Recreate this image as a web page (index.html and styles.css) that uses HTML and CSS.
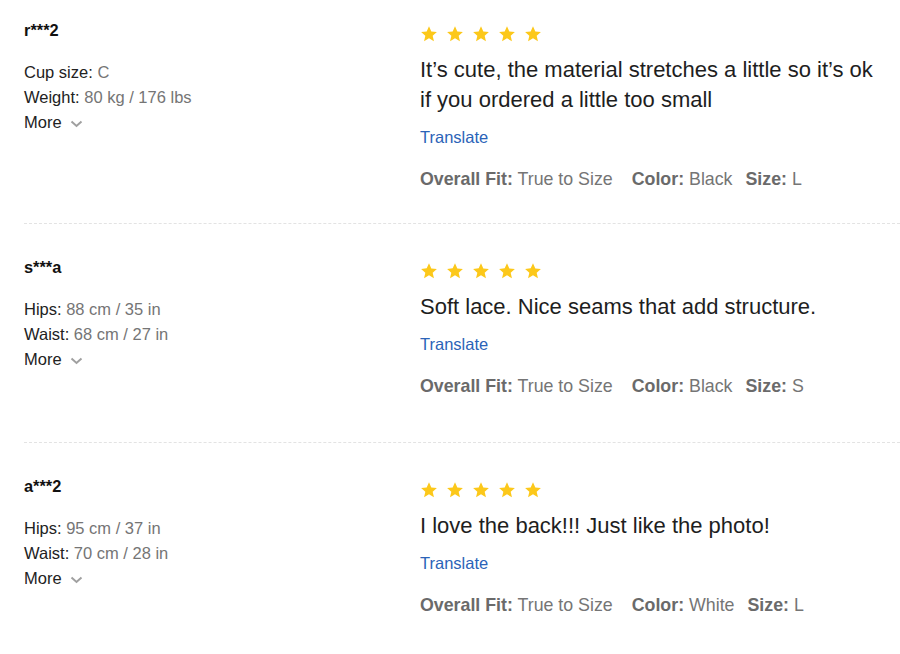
FILE: index.html
```html
<!DOCTYPE html>
<html>
<head>
<meta charset="utf-8">
<link rel="stylesheet" href="styles.css">
</head>
<body>
<div class="reviews">
  <div class="review">
    <div class="user">
      <div class="name">r***2</div>
      <div class="attrs">
        <div class="attr">Cup size: <span class="val">C</span></div>
        <div class="attr">Weight: <span class="val">80 kg / 176 lbs</span></div>
        <div class="more">More <svg class="chev" width="13" height="8" viewBox="0 0 13 8"><path d="M1.5 1.5 L6.5 6 L11.5 1.5" fill="none" stroke="#a0a0a0" stroke-width="2"/></svg></div>
      </div>
    </div>
    <div class="body">
      <div class="stars">
        <svg class="star" viewBox="0 0 24 24"><path d="M12 1.5l3.1 7 7.4.7-5.6 5 1.7 7.4L12 17.8l-6.6 3.8 1.7-7.4-5.6-5 7.4-.7z"/></svg>
        <svg class="star" viewBox="0 0 24 24"><path d="M12 1.5l3.1 7 7.4.7-5.6 5 1.7 7.4L12 17.8l-6.6 3.8 1.7-7.4-5.6-5 7.4-.7z"/></svg>
        <svg class="star" viewBox="0 0 24 24"><path d="M12 1.5l3.1 7 7.4.7-5.6 5 1.7 7.4L12 17.8l-6.6 3.8 1.7-7.4-5.6-5 7.4-.7z"/></svg>
        <svg class="star" viewBox="0 0 24 24"><path d="M12 1.5l3.1 7 7.4.7-5.6 5 1.7 7.4L12 17.8l-6.6 3.8 1.7-7.4-5.6-5 7.4-.7z"/></svg>
        <svg class="star" viewBox="0 0 24 24"><path d="M12 1.5l3.1 7 7.4.7-5.6 5 1.7 7.4L12 17.8l-6.6 3.8 1.7-7.4-5.6-5 7.4-.7z"/></svg>
      </div>
      <p class="text">It’s cute, the material stretches a little so it’s ok if you ordered a little too small</p>
      <a class="translate" href="#">Translate</a>
      <div class="meta">
        <span class="m"><b>Overall Fit:</b> True to Size</span>
        <span class="m"><b>Color:</b> Black</span>
        <span class="m"><b>Size:</b> L</span>
      </div>
    </div>
  </div>

  <div class="review">
    <div class="user">
      <div class="name">s***a</div>
      <div class="attrs">
        <div class="attr">Hips: <span class="val">88 cm / 35 in</span></div>
        <div class="attr">Waist: <span class="val">68 cm / 27 in</span></div>
        <div class="more">More <svg class="chev" width="13" height="8" viewBox="0 0 13 8"><path d="M1.5 1.5 L6.5 6 L11.5 1.5" fill="none" stroke="#a0a0a0" stroke-width="2"/></svg></div>
      </div>
    </div>
    <div class="body">
      <div class="stars">
        <svg class="star" viewBox="0 0 24 24"><path d="M12 1.5l3.1 7 7.4.7-5.6 5 1.7 7.4L12 17.8l-6.6 3.8 1.7-7.4-5.6-5 7.4-.7z"/></svg>
        <svg class="star" viewBox="0 0 24 24"><path d="M12 1.5l3.1 7 7.4.7-5.6 5 1.7 7.4L12 17.8l-6.6 3.8 1.7-7.4-5.6-5 7.4-.7z"/></svg>
        <svg class="star" viewBox="0 0 24 24"><path d="M12 1.5l3.1 7 7.4.7-5.6 5 1.7 7.4L12 17.8l-6.6 3.8 1.7-7.4-5.6-5 7.4-.7z"/></svg>
        <svg class="star" viewBox="0 0 24 24"><path d="M12 1.5l3.1 7 7.4.7-5.6 5 1.7 7.4L12 17.8l-6.6 3.8 1.7-7.4-5.6-5 7.4-.7z"/></svg>
        <svg class="star" viewBox="0 0 24 24"><path d="M12 1.5l3.1 7 7.4.7-5.6 5 1.7 7.4L12 17.8l-6.6 3.8 1.7-7.4-5.6-5 7.4-.7z"/></svg>
      </div>
      <p class="text">Soft lace. Nice seams that add structure.</p>
      <a class="translate" href="#">Translate</a>
      <div class="meta">
        <span class="m"><b>Overall Fit:</b> True to Size</span>
        <span class="m"><b>Color:</b> Black</span>
        <span class="m"><b>Size:</b> S</span>
      </div>
    </div>
  </div>

  <div class="review">
    <div class="user">
      <div class="name">a***2</div>
      <div class="attrs">
        <div class="attr">Hips: <span class="val">95 cm / 37 in</span></div>
        <div class="attr">Waist: <span class="val">70 cm / 28 in</span></div>
        <div class="more">More <svg class="chev" width="13" height="8" viewBox="0 0 13 8"><path d="M1.5 1.5 L6.5 6 L11.5 1.5" fill="none" stroke="#a0a0a0" stroke-width="2"/></svg></div>
      </div>
    </div>
    <div class="body">
      <div class="stars">
        <svg class="star" viewBox="0 0 24 24"><path d="M12 1.5l3.1 7 7.4.7-5.6 5 1.7 7.4L12 17.8l-6.6 3.8 1.7-7.4-5.6-5 7.4-.7z"/></svg>
        <svg class="star" viewBox="0 0 24 24"><path d="M12 1.5l3.1 7 7.4.7-5.6 5 1.7 7.4L12 17.8l-6.6 3.8 1.7-7.4-5.6-5 7.4-.7z"/></svg>
        <svg class="star" viewBox="0 0 24 24"><path d="M12 1.5l3.1 7 7.4.7-5.6 5 1.7 7.4L12 17.8l-6.6 3.8 1.7-7.4-5.6-5 7.4-.7z"/></svg>
        <svg class="star" viewBox="0 0 24 24"><path d="M12 1.5l3.1 7 7.4.7-5.6 5 1.7 7.4L12 17.8l-6.6 3.8 1.7-7.4-5.6-5 7.4-.7z"/></svg>
        <svg class="star" viewBox="0 0 24 24"><path d="M12 1.5l3.1 7 7.4.7-5.6 5 1.7 7.4L12 17.8l-6.6 3.8 1.7-7.4-5.6-5 7.4-.7z"/></svg>
      </div>
      <p class="text">I love the back!!! Just like the photo!</p>
      <a class="translate" href="#">Translate</a>
      <div class="meta">
        <span class="m"><b>Overall Fit:</b> True to Size</span>
        <span class="m"><b>Color:</b> White</span>
        <span class="m"><b>Size:</b> L</span>
      </div>
    </div>
  </div>
</div>
</body>
</html>
```
FILE: styles.css
```css
html, body {
  margin: 0;
  padding: 0;
  background: #fff;
}
body {
  font-family: "Liberation Sans", Arial, sans-serif;
  color: #222;
  overflow: hidden;
}
.reviews {
  margin-top: -13px;
  padding-left: 24px;
}
.review {
  display: flex;
  min-height: 219px;
  box-sizing: border-box;
  padding: 34px 0 34px 0;
  border-bottom: 1px dashed #e3e3e3;
}
.user {
  width: 396px;
  flex: none;
}
.name {
  font-weight: bold;
  font-size: 16.4px;
  line-height: 18px;
  color: #111;
}
.attrs {
  margin-top: 21px;
  font-size: 16.5px;
  line-height: 25px;
  color: #222;
}
.val {
  color: #757575;
}
.more {
  display: flex;
  align-items: center;
  gap: 8px;
}
.chev {
  display: block;
  margin-top: 2px;
}
.body {
  flex: 1;
  padding-right: 20px;
}
.stars {
  display: flex;
  gap: 8px;
  margin-top: 4px;
  height: 18px;
}
.star {
  width: 18px;
  height: 18px;
  fill: #fcc81a;
}
.text {
  margin: 12px 0 0 0;
  font-size: 22px;
  line-height: 30px;
  color: #1e1e1e;
}
.translate {
  display: block;
  margin-top: 12px;
  font-size: 16.5px;
  line-height: 20px;
  color: #2b63b8;
  text-decoration: none;
}
.meta {
  margin-top: 22px;
  font-size: 17.8px;
  line-height: 20px;
  color: #757575;
  display: flex;
}
.meta b {
  color: #6a6a6a;
}
.m {
  margin-right: 19px;
}
.m + .m {
  margin-right: 13px;
}
```
